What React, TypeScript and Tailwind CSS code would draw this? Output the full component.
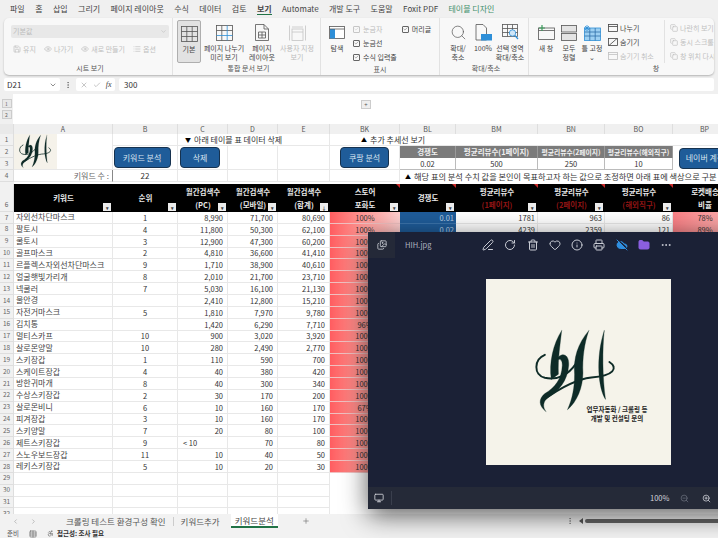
import React from 'react';
import {
  Check, ChevronDown, ChevronLeft, ChevronRight, CloudOff, Copy, EllipsisVertical, Eye, Heart, Images, Info, List, Monitor, MoreHorizontal,
  PenLine, Plus, Printer, RotateCw, Save, Search, Trash2, X, ZoomIn, ZoomOut, Accessibility, Folder, Table,
} from 'lucide-react';

interface KeywordRow {
  name: string;
  rank: string;
  pc: string;
  mobile: string;
  total: string;
  store: string;
}

const rows: KeywordRow[] = [
  { name: '자외선차단마스크', rank: '1', pc: '8,990', mobile: '71,700', total: '80,690', store: '100%' },
  { name: '팔토시', rank: '4', pc: '11,800', mobile: '50,300', total: '62,100', store: '100%' },
  { name: '쿨토시', rank: '3', pc: '12,900', mobile: '47,300', total: '60,200', store: '100%' },
  { name: '골프마스크', rank: '2', pc: '4,810', mobile: '36,600', total: '41,410', store: '100%' },
  { name: '르플렉스자외선차단마스크', rank: '9', pc: '1,710', mobile: '38,900', total: '40,610', store: '100%' },
  { name: '얼굴햇빛가리개', rank: '8', pc: '2,010', mobile: '21,700', total: '23,710', store: '100%' },
  { name: '넥쿨러', rank: '7', pc: '5,030', mobile: '16,100', total: '21,130', store: '100%' },
  { name: '물안경', rank: '', pc: '2,410', mobile: '12,800', total: '15,210', store: '100%' },
  { name: '자전거마스크', rank: '5', pc: '1,810', mobile: '7,970', total: '9,780', store: '100%' },
  { name: '김치통', rank: '', pc: '1,420', mobile: '6,290', total: '7,710', store: '96%' },
  { name: '멀티스카프', rank: '10', pc: '900', mobile: '3,020', total: '3,920', store: '100%' },
  { name: '살로몬양말', rank: '10', pc: '280', mobile: '2,490', total: '2,770', store: '100%' },
  { name: '스키장갑', rank: '1', pc: '110', mobile: '590', total: '700', store: '100%' },
  { name: '스케이트장갑', rank: '4', pc: '40', mobile: '380', total: '420', store: '100%' },
  { name: '방한귀마개', rank: '8', pc: '40', mobile: '300', total: '340', store: '100%' },
  { name: '수상스키장갑', rank: '2', pc: '30', mobile: '170', total: '200', store: '100%' },
  { name: '살로몬비니', rank: '6', pc: '10', mobile: '160', total: '170', store: '67%' },
  { name: '피겨장갑', rank: '3', pc: '10', mobile: '160', total: '170', store: '100%' },
  { name: '스키양말', rank: '7', pc: '20', mobile: '80', total: '100', store: '100%' },
  { name: '제트스키장갑', rank: '9', pc: '< 10', mobile: '70', total: '80', store: '100%' },
  { name: '스노우보드장갑', rank: '11', pc: '10', mobile: '40', total: '50', store: '100%' },
  { name: '레키스키장갑', rank: '5', pc: '10', mobile: '20', total: '30', store: '100%' },
];

const extra = [
  { bl: '0.01', bm: '1781', bn: '963', bo: '86', bp: '78%' },
  { bl: '0.02', bm: '4239', bn: '2359', bo: '121', bp: '89%' },
];

const tabs = ['파일', '홈', '삽입', '그리기', '페이지 레이아웃', '수식', '데이터', '검토', '보기', 'Automate', '개발 도구', '도움말', 'Foxit PDF', '테이블 디자인'];

const colHeads = ['A', 'B', 'C', 'D', 'E', 'BK', 'BL', 'BM', 'BN', 'BO', 'BP'];

// hand drawn monogram, used in the cell and in the photo viewer
const Logo: React.FC<{ className?: string }> = ({ className }) => (
  <svg viewBox="150 155 285 270" className={className} fill="#0e2b27" stroke="#0e2b27" strokeLinecap="round">
    <path d="M248 165C244 205 236 250 238 300L216 316C208 265 222 205 248 165Z" strokeWidth="1" />
    <path d="M332 165C318 205 312 250 314 296C314 340 296 385 266 410C282 375 288 340 288 300C284 250 298 205 332 165Z" strokeWidth="1" />
    <path d="M380 165C374 220 374 310 384 378C362 345 352 250 380 165Z" strokeWidth="1" />
    <path d="M226 262C246 226 272 236 270 272C266 322 240 350 206 372C188 386 190 404 200 416C176 398 176 376 196 360C228 340 248 316 250 272C250 250 238 250 226 262Z" strokeWidth="1" />
    <path d="M196 240C162 254 160 302 196 311C236 320 270 300 292 268" fill="none" strokeWidth="6" />
    <path d="M396 262C424 280 410 306 340 310C290 316 240 345 194 378" fill="none" strokeWidth="6" />
  </svg>
);

const GridIcon: React.FC<{ muted?: boolean }> = ({ muted }) => (
  <svg width="17" height="16" viewBox="0 0 17 16" fill="none" stroke={muted ? '#b5b5b5' : '#555'} strokeWidth="0.8">
    <rect x="0.5" y="0.5" width="16" height="15" />
    <path d="M5.8 .5V15.5M11.2 .5V15.5M.5 5.5H16.5M.5 10.5H16.5" />
  </svg>
);

const SplitGridIcon = () => (
  <svg width="17" height="16" viewBox="0 0 17 16" fill="none" stroke="#555" strokeWidth="0.8">
    <rect x="0.5" y="0.5" width="16" height="15" />
    <path d="M5.8 .5V15.5M.5 5.5H16.5" />
    <path d="M11.2 .5V15.5M.5 10.5H16.5" stroke="#2f8fd6" />
  </svg>
);

const PageIcon = () => (
  <svg width="14" height="17" viewBox="0 0 14 17" fill="none" stroke="#555" strokeWidth="0.8">
    <path d="M.5 .5H9L13.5 5V16.5H.5Z" />
    <path d="M9 .5V5H13.5" />
    <path d="M3.5 8H10.5V14H3.5ZM3.5 11H10.5M7 8V14" />
  </svg>
);

const CustomViewIcon = () => (
  <svg width="17" height="16" viewBox="0 0 17 16" fill="none" stroke="#c4c4c4" strokeWidth="0.8">
    <path d="M.5 .5V15.5M16.5 .5V15.5M3 2H14" />
    <rect x="3" y="4" width="11" height="11.5" />
    <path d="M3 7H14" />
  </svg>
);

const NavIcon = () => (
  <svg width="16" height="13" viewBox="0 0 16 13" fill="none">
    <rect x="0.5" y="0.5" width="15" height="12" fill="#fff" stroke="#555" strokeWidth="0.8" />
    <rect x="1" y="3" width="5" height="9.5" fill="#2e8fd8" />
    <path d="M.5 3H15.5" stroke="#555" strokeWidth="0.8" />
  </svg>
);

const HundredIcon = () => (
  <svg width="17" height="17" viewBox="0 0 17 17" fill="none">
    <path d="M1 .5H8L11.5 4V16H1Z" stroke="#555" strokeWidth="0.8" />
    <rect x="6" y="10" width="11" height="6.5" fill="#2e8fd8" />
  </svg>
);

const SelectZoomIcon = () => (
  <svg width="17" height="17" viewBox="0 0 17 17" fill="none" stroke="#555" strokeWidth="0.8">
    <rect x="0.5" y="0.5" width="15" height="12" />
    <path d="M5.5 .5V12.5M10.5 .5V12.5M.5 4.5H15.5M.5 8.5H15.5" />
    <circle cx="10.5" cy="9" r="3.2" fill="#cfe6f8" stroke="#2e8fd8" />
    <path d="M13 11.5L16 15" stroke="#2e8fd8" strokeWidth="1.2" />
  </svg>
);

const NewWindowIcon = () => (
  <svg width="17" height="15" viewBox="0 0 17 15" fill="none">
    <rect x="0.5" y="3" width="16" height="11.5" stroke="#555" strokeWidth="0.8" />
    <path d="M.5 5.5H16.5" stroke="#555" strokeWidth="0.8" />
    <path d="M4 0V6M1 3H7" stroke="#3a9a5a" strokeWidth="1.2" />
  </svg>
);

const ArrangeIcon = () => (
  <svg width="16" height="16" viewBox="0 0 16 16" fill="none" stroke="#555" strokeWidth="0.8">
    <rect x="0.5" y="0.5" width="15" height="6.5" fill="#e4e4e4" />
    <rect x="0.5" y="8.5" width="15" height="7" fill="#e4e4e4" />
  </svg>
);

const FreezeIcon = () => (
  <svg width="17" height="16" viewBox="0 0 17 16" fill="none">
    <rect x="0.5" y="3" width="16" height="12.5" fill="#9dd0f2" stroke="#2e8fd8" strokeWidth="0.8" />
    <path d="M5.8 3V15.5M11.2 3V15.5M.5 7H16.5M.5 11H16.5" stroke="#2e6fa8" strokeWidth="0.8" />
    <path d="M3 0V6M0 3H6M1 1L5 5M5 1L1 5" stroke="#2e8fd8" strokeWidth="0.8" />
  </svg>
);

function SplitSmallIcon() {
  return (
    <svg width="10" height="8" viewBox="0 0 10 8" fill="none" stroke="currentColor" strokeWidth="0.8">
      <rect x="0.5" y="0.5" width="9" height="7" />
      <path d="M.5 2.5H9.5" />
    </svg>
  );
}

function HideIcon() {
  return (
    <svg width="10" height="8" viewBox="0 0 10 8" fill="none" stroke="currentColor" strokeWidth="0.8">
      <rect x="0.5" y="0.5" width="9" height="7" />
      <path d="M1 7.5L9 .5" />
    </svg>
  );
}

const RibbonBtn: React.FC<{ w: string; icon: React.ReactNode; lines: string[]; muted?: boolean; active?: boolean }> = ({ w, icon, lines, muted, active }) => (
  <div className={`${w} flex flex-col items-center pt-[4px] h-[43px] rounded-[2px] ${active ? 'bg-[#e2e2e2] border border-[#aeaeae]' : ''}`}>
    <div className="h-[17px] flex items-center justify-center">{icon}</div>
    <div className={`mt-[3px] text-[7px] leading-[9px] text-center whitespace-nowrap ${muted ? 'text-[#bbb]' : 'text-[#444]'}`}>
      {lines.map((l) => (
        <div key={l}>{l}</div>
      ))}
    </div>
  </div>
);

const CheckItem: React.FC<{ label: string; muted?: boolean }> = ({ label, muted }) => (
  <div className={`flex items-center gap-[3px] h-[14px] text-[7px] whitespace-nowrap ${muted ? 'text-[#bbb]' : 'text-[#444]'}`}>
    <span className={`w-[7px] h-[7px] border rounded-[1px] flex items-center justify-center ${muted ? 'border-[#c6c6c6]' : 'border-[#666]'}`}>
      <Check size={6} strokeWidth={2} />
    </span>
    {label}
  </div>
);

const SmallItem: React.FC<{ icon: React.ReactNode; label: string; muted?: boolean }> = ({ icon, label, muted }) => (
  <div className={`flex items-center gap-[2px] h-[14px] text-[7px] whitespace-nowrap ${muted ? 'text-[#c0c0c0]' : 'text-[#444]'}`}>
    {icon}
    {label}
  </div>
);

const GroupLabel: React.FC<{ children: React.ReactNode }> = ({ children }) => (
  <div className="h-[12px] shrink-0 text-center text-[7px] leading-[11px] text-[#555]">{children}</div>
);

const Ribbon = () => (
  <div className="mx-[4px] h-[57px] bg-[#f8f8f8] rounded-[5px] shadow-[0_1px_2px_rgba(0,0,0,0.25)] flex overflow-hidden">
    {/* 시트 보기 */}
    <div className="w-[169px] shrink-0 flex flex-col pl-[7px] pr-[3px] border-r border-[#e2e2e2]">
      <div className="flex-1 pt-[7px]">
        <div className="h-[13px] w-[158px] bg-[#e8e8e8] rounded-[2px] flex items-center justify-between px-[2px] text-[7px] text-[#bbb]">
          기본값
          <ChevronDown size={7} />
        </div>
        <div className="flex items-center gap-[8px] mt-[4px] pl-[2px] text-[7px] text-[#c0c0c0]">
          <SmallItem muted icon={<Save size={8} />} label="유지" />
          <SmallItem muted icon={<Eye size={8} />} label="나가기" />
          <SmallItem muted icon={<Eye size={8} />} label="새로 만들기" />
          <SmallItem muted icon={<List size={8} />} label="옵션" />
        </div>
      </div>
      <GroupLabel>시트 보기</GroupLabel>
    </div>
    {/* 통합 문서 보기 */}
    <div className="w-[148px] shrink-0 flex flex-col pl-[4px] border-r border-[#e2e2e2]">
      <div className="flex-1 flex pt-[2px]">
        <RibbonBtn active w="w-[24px]" icon={<GridIcon />} lines={['기본']} />
        <RibbonBtn w="w-[46px]" icon={<SplitGridIcon />} lines={['페이지 나누기', '미리 보기']} />
        <RibbonBtn w="w-[30px]" icon={<PageIcon />} lines={['페이지', '레이아웃']} />
        <RibbonBtn muted w="w-[40px]" icon={<CustomViewIcon />} lines={['사용자 지정', '보기']} />
      </div>
      <GroupLabel>통합 문서 보기</GroupLabel>
    </div>
    {/* 표시 */}
    <div className="w-[119px] shrink-0 flex flex-col border-r border-[#e2e2e2]">
      <div className="flex-1 flex pt-[2px] pl-[5px]">
        <RibbonBtn w="w-[22px]" icon={<NavIcon />} lines={['탐색']} />
        <div className="ml-[5px] pt-[2px]">
          <CheckItem muted label="눈금자" />
          <CheckItem label="눈금선" />
          <CheckItem label="수식 입력줄" />
        </div>
        <div className="ml-[5px] pt-[2px]">
          <CheckItem label="머리글" />
        </div>
      </div>
      <GroupLabel>표시</GroupLabel>
    </div>
    {/* 확대/축소 */}
    <div className="w-[89px] shrink-0 flex flex-col pl-[4px] border-r border-[#e2e2e2]">
      <div className="flex-1 flex pt-[2px]">
        <RibbonBtn w="w-[28px]" icon={<Search size={17} strokeWidth={1} color="#555" />} lines={['확대/', '축소']} />
        <RibbonBtn w="w-[22px]" icon={<HundredIcon />} lines={['100%']} />
        <RibbonBtn w="w-[32px]" icon={<SelectZoomIcon />} lines={['선택 영역', '확대/축소']} />
      </div>
      <GroupLabel>확대/축소</GroupLabel>
    </div>
    {/* 창 */}
    <div className="w-[248px] shrink-0 flex flex-col pl-[6px] overflow-hidden">
      <div className="flex-1 flex pt-[2px]">
        <RibbonBtn w="w-[22px]" icon={<NewWindowIcon />} lines={['새 창']} />
        <RibbonBtn w="w-[24px]" icon={<ArrangeIcon />} lines={['모두', '정렬']} />
        <RibbonBtn w="w-[22px]" icon={<FreezeIcon />} lines={['틀 고정', '⌄']} />
        <div className="ml-[5px] pt-[1px] w-[57px] border-r border-[#e2e2e2] h-[43px]">
          <SmallItem icon={<SplitSmallIcon />} label="나누기" />
          <SmallItem icon={<HideIcon />} label="숨기기" />
          <SmallItem muted icon={<SplitSmallIcon />} label="숨기기 취소" />
        </div>
        <div className="ml-[5px] pt-[1px]">
          <SmallItem muted icon={<Copy size={8} />} label="나란히 보기" />
          <SmallItem muted icon={<Copy size={8} />} label="동시 스크롤" />
          <SmallItem muted icon={<Copy size={8} />} label="창 위치 다시" />
        </div>
      </div>
      <GroupLabel>창</GroupLabel>
    </div>
  </div>
);

const FormulaBar = () => (
  <div className="h-[19px] flex items-center px-[4px] gap-[4px] text-[8px] text-[#333]">
    <div className="w-[56px] h-[13px] bg-white rounded-[2px] flex items-center justify-between px-[3px]">
      D21
      <ChevronDown size={8} color="#555" />
    </div>
    <EllipsisVertical size={8} color="#666" className="w-[8px]" />
    <div className="w-[39px] h-[13px] bg-white rounded-[2px] flex items-center justify-around px-[1px] text-[#aaa]">
      <X size={8} />
      <Check size={8} />
      <span className="font-['Liberation_Serif',serif] italic text-[8px] text-[#444]">fx</span>
    </div>
    <div className="flex-1 h-[13px] bg-white rounded-[2px] flex items-center px-[5px]">300</div>
  </div>
);

const OutlineBar = () => (
  <div className="h-[30px] flex bg-white">
    <div className="w-[13px] bg-[#f0f0f0] flex flex-col items-center pt-[5px] gap-[2px]">
      <span className="w-[10px] h-[9px] border border-[#ccc] bg-[#e8e8e8] text-[5px] leading-[7px] text-center text-[#666]">1</span>
      <span className="w-[10px] h-[9px] border border-[#ccc] bg-[#e8e8e8] text-[5px] leading-[7px] text-center text-[#666]">2</span>
    </div>
    <div className="pl-[348px] pt-[6px]">
      <span className="block w-[10px] h-[9px] border border-[#ccc] bg-[#eee] text-[6px] leading-[7px] text-center text-[#555]">+</span>
    </div>
  </div>
);

const columns = 'grid grid-cols-[14px_99px_65px_50px_50px_52px_70px_56px_82px_67px_68px_64px]';
const cellLine = 'border-r border-b border-[#e8e8e8]';
const gutterCell = 'bg-[#f1f1f1] border-r border-b border-[#dedede] flex items-center justify-center text-[6.5px] text-[#666]';
const blueBtn = 'h-[21px] bg-[#1f5c99] border border-[#16324f] rounded-[4px] flex items-center justify-center text-[8px] text-[#d8e4f0] whitespace-nowrap overflow-hidden';

const FilterBtn: React.FC<{ sorted?: boolean }> = ({ sorted }) => (
  <span className="absolute right-[2px] bottom-[1px] w-[8px] h-[8px] bg-[#ececec] flex items-center justify-center text-[5px] text-[#444] leading-none">
    {sorted ? '↓' : '▾'}
  </span>
);

const HeadCell: React.FC<{ top: string; bottom?: string; red?: boolean; sorted?: boolean; note?: boolean }> = ({ top, bottom, red, sorted, note }) => (
  <div className="relative bg-black flex flex-col items-center justify-center gap-[3px] text-[7.5px] font-bold leading-[10px] text-[#e8e8e8] whitespace-nowrap overflow-hidden">
    <span>{top}</span>
    {bottom && <span className={red ? 'text-[#8f1414]' : ''}>{bottom}</span>}
    {note && <span className="absolute top-0 right-0 w-0 h-0 border-l-[4px] border-l-transparent border-t-[4px] border-t-[#c62828]" />}
    <FilterBtn sorted={sorted} />
  </div>
);

const SheetTop = () => (
  <div className={`${columns} grid-rows-[10px_12px_12px_12px_12px_2px]`}>
    {/* column letters */}
    <div className="bg-[#e9e9e9] border-r border-[#dedede]" />
    {colHeads.map((c) => (
      <div key={c} className="bg-[#f0f0f0] border-r border-[#dedede] flex items-center justify-center text-[7px] text-[#555]">
        {c}
      </div>
    ))}

    {/* row 1 */}
    <div className={`${gutterCell} col-start-1 row-start-2`}>1</div>
    <div className={`${cellLine} col-start-2 row-start-2 row-span-3 flex`}>
      <div className="w-[43px] h-full bg-[#f5f2ea] flex items-center justify-center">
        <Logo className="w-[41px] h-[35px]" />
      </div>
    </div>
    <div className={`${cellLine} col-start-3 row-start-2`} />
    <div className={`${cellLine} col-start-4 col-span-3 row-start-2 flex items-center pl-[7px] gap-[3px] whitespace-nowrap text-[8px]`}>
      <span className="text-[6px] text-black">▼</span>아래 테이블 표 데이터 삭제
    </div>
    <div className={`${cellLine} col-start-7 col-span-6 row-start-2 flex items-center pl-[31px] gap-[3px] whitespace-nowrap text-[8px]`}>
      <span className="text-[6px] text-black">▲</span>추가 추세선 보기
    </div>

    {/* rows 2-3 */}
    <div className={`${gutterCell} col-start-1 row-start-3`}>2</div>
    <div className={`${gutterCell} col-start-1 row-start-4`}>3</div>
    <div className={`${cellLine} col-start-3 row-start-3 row-span-2 flex items-center justify-center pr-[6px]`}>
      <div className={`${blueBtn} w-[57px]`}>키워드 분석</div>
    </div>
    <div className={`${cellLine} col-start-4 row-start-3 row-span-2 flex items-center pl-[2px]`}>
      <div className={`${blueBtn} w-[40px]`}>삭제</div>
    </div>
    <div className={`${cellLine} col-start-5 row-start-3 row-span-2`} />
    <div className={`${cellLine} col-start-6 row-start-3 row-span-2`} />
    <div className={`${cellLine} col-start-7 row-start-3 row-span-2 flex items-center pl-[10px]`}>
      <div className={`${blueBtn} w-[49px]`}>쿠팡 분석</div>
    </div>
    <div className="col-start-8 row-start-3 bg-[#7b7b7b] border-r border-[#9a9a9a] flex items-center justify-center text-[7.5px] font-bold text-[#f0f0f0]">경쟁도</div>
    <div className="col-start-9 row-start-3 bg-[#7b7b7b] border-r border-[#9a9a9a] flex items-center justify-center text-[7.5px] font-bold text-[#f0f0f0] whitespace-nowrap overflow-hidden">평균리뷰수(1페이지)</div>
    <div className="col-start-10 row-start-3 bg-[#7b7b7b] border-r border-[#9a9a9a] flex items-center justify-center text-[6.8px] font-bold text-[#f0f0f0] whitespace-nowrap overflow-hidden">평균리뷰수(2페이지)</div>
    <div className="col-start-11 row-start-3 bg-[#7b7b7b] border-r border-[#9a9a9a] flex items-center justify-center text-[6.8px] font-bold text-[#f0f0f0] whitespace-nowrap overflow-hidden">평균리뷰수(해외직구)</div>
    {['0.02', '500', '250', '10'].map((t, i) => (
      <div
        key={t}
        className={`${['col-start-8', 'col-start-9', 'col-start-10', 'col-start-11'][i]} row-start-4 border-r border-b border-[#bbb] flex items-center justify-center text-[#333] text-[7.5px]`}
      >
        {t}
      </div>
    ))}
    <div className="col-start-12 row-start-3 row-span-2 flex items-center pl-[6px] overflow-hidden">
      <div className={`${blueBtn} w-[52px] shrink-0`}>네이버 계정</div>
    </div>

    {/* row 4 */}
    <div className={`${gutterCell} col-start-1 row-start-5`}>4</div>
    <div className="col-start-2 row-start-5 border-b border-r border-b-[#e8e8e8] border-r-[#888] flex items-center justify-end pr-[3px] text-[8px] text-[#666]">키워드 수 :</div>
    <div className={`${cellLine} col-start-3 row-start-5 flex items-center justify-center text-[8px]`}>22</div>
    <div className={`${cellLine} col-start-4 row-start-5`} />
    <div className={`${cellLine} col-start-5 row-start-5`} />
    <div className={`${cellLine} col-start-6 row-start-5`} />
    <div className={`${cellLine} col-start-7 row-start-5`} />
    <div className="col-start-8 col-span-5 row-start-5 flex items-center pl-[5px] gap-[3px] whitespace-nowrap overflow-hidden text-[8.2px]">
      <span className="text-[6px] text-black">▲</span>해당 표의 분석 수치 값을 본인이 목표하고자 하는 값으로 조정하면 아래 표에 색상으로 구분
    </div>

    {/* row 5 is nearly closed */}
    <div className="bg-[#f1f1f1] col-start-1 row-start-6" />
  </div>
);

const SheetHeader = () => (
  <div className={`${columns} h-[28px]`}>
    <div className={`${gutterCell} items-end pb-[1px]`}>6</div>
    <HeadCell top="키워드" />
    <HeadCell top="순위" />
    <HeadCell top="월간검색수" bottom="(PC)" />
    <HeadCell top="월간검색수" bottom="(모바일)" />
    <HeadCell top="월간검색수" bottom="(합계)" sorted />
    <HeadCell top="스토어" bottom="포화도" note />
    <HeadCell top="경쟁도" note />
    <HeadCell top="평균리뷰수" bottom="(1페이지)" red note />
    <HeadCell top="평균리뷰수" bottom="(2페이지)" red note />
    <HeadCell top="평균리뷰수" bottom="(해외직구)" red note />
    <HeadCell top="로켓배송" bottom="비율" note />
  </div>
);

const SheetBody = () => (
  <div className={`${columns} auto-rows-[11.86px]`}>
    {rows.map((r, i) => (
      <React.Fragment key={r.name}>
        <div className={gutterCell}>{i + 7}</div>
        <div className={`${cellLine} flex items-center pl-[2px] text-[8px] text-[#444] whitespace-nowrap overflow-hidden`}>{r.name}</div>
        <div className={`${cellLine} flex items-center justify-center`}>{r.rank}</div>
        {r.pc.startsWith('<') ? (
          <div className={`${cellLine} flex items-center pl-[5px]`}>{r.pc}</div>
        ) : (
          <div className={`${cellLine} flex items-center justify-end pr-[4px]`}>{r.pc}</div>
        )}
        <div className={`${cellLine} flex items-center justify-end pr-[4px]`}>{r.mobile}</div>
        <div className={`${cellLine} flex items-center justify-end pr-[4px]`}>{r.total}</div>
        <div className="border-b border-[#f0c0c0] bg-linear-to-r from-[#ff5c60] to-[#ffd0d0] flex items-center justify-center">{r.store}</div>
        {extra[i] ? (
          <>
            <div className="bg-[#1f5c99] border-b border-[#3b74ab] flex items-center justify-end pr-[2px] text-[#b9cfe4]">{extra[i].bl}</div>
            <div className={`${cellLine} flex items-center justify-end pr-[2px]`}>{extra[i].bm}</div>
            <div className={`${cellLine} flex items-center justify-end pr-[2px]`}>{extra[i].bn}</div>
            <div className={`${cellLine} flex items-center justify-end pr-[2px]`}>{extra[i].bo}</div>
            <div className="bg-linear-to-r from-[#f98085] to-[#fbb4b4] flex items-center justify-center">{extra[i].bp}</div>
          </>
        ) : (
          <div className="col-span-5" />
        )}
      </React.Fragment>
    ))}

    {[29, 30, 31, 32].map((n) => (
      <React.Fragment key={n}>
        <div className={gutterCell}>{n}</div>
        <div className={cellLine} />
        <div className={cellLine} />
        <div className={cellLine} />
        <div className={cellLine} />
        <div className={cellLine} />
        <div className="col-span-6" />
      </React.Fragment>
    ))}
  </div>
);

const Sheet = () => (
  <div className="h-[390px] overflow-hidden bg-white text-[7.5px] text-[#333]">
    <SheetTop />
    <SheetHeader />
    <SheetBody />
  </div>
);

const SheetTabs = () => (
  <div className="h-[14px] flex items-center bg-[#f2f2f2] text-[8.5px] text-[#555]">
    <ChevronLeft size={7} className="ml-[12px]" color="#999" />
    <ChevronRight size={7} className="ml-[11px]" color="#999" />
    <span className="ml-[29px] whitespace-nowrap">크롤링 테스트 환경구성 확인</span>
    <span className="ml-[7px] h-[9px] border-l border-[#ccc]" />
    <span className="ml-[7px] whitespace-nowrap">키워드추가</span>
    <span className="ml-[11px] h-[14px] bg-white px-[4px] whitespace-nowrap border-b-[2px] border-[#217346] leading-[12px] text-[#444]">키워드분석</span>
    <Plus size={8} className="ml-[24px]" color="#777" />
    <EllipsisVertical size={8} className="ml-[256px]" color="#777" />
    <span className="ml-[5px] w-0 h-0 border-y-[3px] border-y-transparent border-r-[4px] border-r-[#555]" />
    <span className="ml-[2px] flex-1 h-[4px] rounded-l-[2px] bg-[#666]" />
  </div>
);

const StatusBar = () => (
  <div className="h-[11px] flex items-center bg-[#f2f2f2] pl-[7px] text-[6.5px] text-[#555]">
    준비
    <Table size={8} className="ml-[10px]" color="#666" />
    <Accessibility size={7} className="ml-[10px]" color="#555" />
    <span className="ml-[3px] font-bold text-[#333]">접근성: 조사 필요</span>
  </div>
);

const Toolbar = () => (
  <div className="h-[26px] flex items-center text-[#c9ccd4] shrink-0">
    <div className="w-[27px] h-full bg-[#242938] flex items-center justify-center">
      <Images size={10} />
    </div>
    <span className="ml-[10px] w-[77px] text-[7.5px] text-[#b0b4c0]">HIH.jpg</span>
    <div className="flex items-center gap-[10.3px]">
      <PenLine size={12} />
      <RotateCw size={12} />
      <Trash2 size={12} />
      <Heart size={12} />
      <Info size={12} />
      <Printer size={12} />
      <CloudOff size={12} color="#2f8fe0" fill="#2f8fe0" />
      <Folder size={12} color="#8b5fe0" fill="#8b5fe0" />
      <MoreHorizontal size={12} />
    </div>
  </div>
);

// the photo viewer window floating above the sheet
const ViewerWindow = () => (
  <div className="absolute left-[368px] top-[232px] w-[421px] h-[277px] bg-[#1b2136] rounded-tl-[4px] shadow-[0_6px_26px_rgba(0,0,0,0.65)] flex flex-col">
    <Toolbar />
    <div className="flex-1 flex items-center justify-center pb-[2px]">
      <div className="relative w-[185px] h-[186px] bg-[#f5f3ea]">
        <Logo className="absolute left-[44px] top-[46px] w-[92px] h-[92px]" />
        <div className="absolute left-[96px] top-[126px] w-[70px] text-center text-[6.5px] leading-[9px] font-bold text-[#1c1c1c] whitespace-nowrap">
          <div>업무자동화 / 크롤링 등</div>
          <div>개발 및 컨설팅 문의</div>
        </div>
      </div>
    </div>
    <div className="h-[22px] shrink-0 bg-[#252a38] flex items-center text-[#d4d6dc] rounded-bl-[3px]">
      <Monitor size={10} className="ml-[6px]" />
      <span className="ml-[7px] h-[14px] border-l border-[#3a3f4d]" />
      <span className="ml-[258px] text-[7.5px]">100%</span>
      <ZoomOut size={9} className="ml-[11px]" color="#6a6f7c" />
      <ZoomIn size={9} className="ml-[13px]" />
    </div>
  </div>
);

export default function App() {
  return (
    <div className="relative w-[718px] h-[538px] overflow-hidden bg-[#f0f0f0] font-['Noto_Sans_CJK_KR','Noto_Sans',sans-serif]">
      <div className="h-[18px] flex items-center pl-[10px] gap-[10.4px] text-[8px] text-[#444] whitespace-nowrap">
        {tabs.map((t) => (
          <span
            key={t}
            className={
              t === '보기'
                ? 'border-b-[1.5px] border-[#217346] font-bold leading-[11px]'
                : t === '테이블 디자인'
                  ? 'text-[#3f8f6b]'
                  : ''
            }
          >
            {t}
          </span>
        ))}
      </div>
      <Ribbon />
      <FormulaBar />
      <OutlineBar />
      <Sheet />
      <SheetTabs />
      <StatusBar />
      <ViewerWindow />
    </div>
  );
}
